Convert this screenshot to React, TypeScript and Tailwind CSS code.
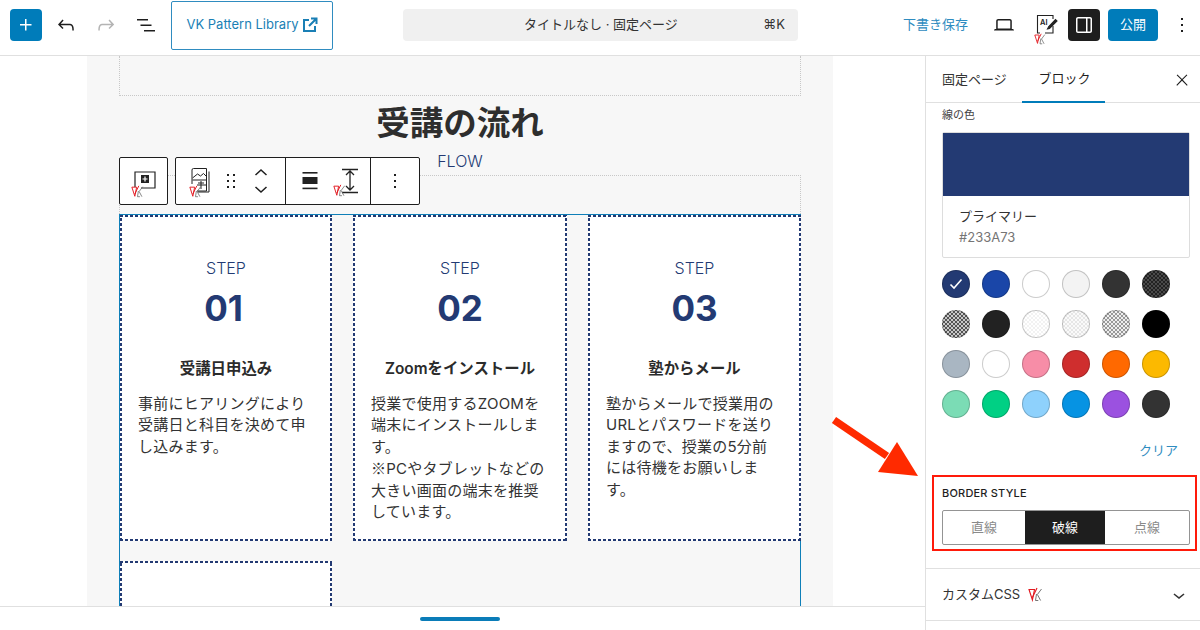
import React from "react";

const font = "font-['Inter','Noto_Sans_CJK_JP',sans-serif]";

function Wp({ d, size = 24, className = "" }: { d: string; size?: number; className?: string }) {
  return (
    <svg width={size} height={size} viewBox="0 0 24 24" fill="currentColor" className={className}>
      <path d={d} />
    </svg>
  );
}

const P = {
  plus: "M11 12.5V17.5H12.5V12.5H17.5V11H12.5V6H11V11H6V12.5H11Z",
  undo: "M18.3 11.7c-.6-.6-1.4-.9-2.3-.9H6.7l2.9-3.3-1.1-1-4.5 5L8.5 16l1-1-2.7-2.7H16c.5 0 .9.2 1.3.5 1 1 1 3.4 1 4.5v.3h1.5v-.2c0-1.5 0-4.3-1.5-5.7z",
  redo: "M15.6 6.5l-1.1 1 2.9 3.3H8c-.9 0-1.7.3-2.3.9-1.4 1.5-1.4 4.2-1.4 5.6v.2h1.5v-.3c0-1.1 0-3.5 1-4.5.3-.3.7-.5 1.3-.5h9.2L14.5 15l1.1 1.1 4.6-4.6-4.6-5z",
  list: "M3 6h11v1.5H3V6zm3.5 5.5h11V13h-11v-1.5zM21 17H10v1.5h11V17z",
  more: "M13 19h-2v-2h2v2zm0-6h-2v-2h2v2zm0-6h-2V5h2v2z",
  drag: "M8 7h2V5H8v2zm0 6h2v-2H8v2zm0 6h2v-2H8v2zm6-14v2h2V5h-2zm0 8h2v-2h-2v2zm0 6h2v-2h-2v2z",
  close: "M13 11.8l6.1-6.3-1-1-6.1 6.2-6.1-6.2-1 1 6.1 6.3-6.5 6.7 1 1 6.5-6.6 6.5 6.6 1-1z",
  panel: "M18 4H6c-1.1 0-2 .9-2 2v12c0 1.1.9 2 2 2h12c1.1 0 2-.9 2-2V6c0-1.1-.9-2-2-2zM5.5 18V6c0-.3.2-.5.5-.5h8v13H6a.5.5 0 01-.5-.5zm13 0c0 .3-.2.5-.5.5h-2.5v-13H18c.3 0 .5.2.5.5v12z",
  laptop: "M20.5 16h-.7V8c0-1.1-.9-2-2-2H6.2c-1.1 0-2 .9-2 2v8h-.7c-.8 0-1.5.7-1.5 1.5h20c0-.8-.7-1.5-1.5-1.5zM5.7 8c0-.3.2-.5.5-.5h11.6c.3 0 .5.2.5.5v7.6H5.7V8z",
  chevDown: "M17.5 11.6L12 16l-5.5-4.4.9-1.2L12 14l4.5-3.6 1 1.2z",
};

function Vk({ className = "", size = 15 }: { className?: string; size?: number }) {
  return (
    <svg width={size} height={size} viewBox="0 0 15 15" fill="none" className={className}>
      <path d="M1 2.5h5.5L4.4 13z" stroke="#e2171e" strokeWidth="1.1" />
      <path d="M9 1L4.4 10.5" stroke="#e2171e" strokeWidth="1.1" />
      <path d="M8.5 7l-1 6.5h2.8M13.5 2L9.4 7.5l3.2 6" stroke="#666" strokeWidth="0.9" />
    </svg>
  );
}

function HeaderIcon({ d, className = "" }: { d: string; className?: string }) {
  return (
    <div className={`w-10 h-8 flex items-center justify-center ${className}`}>
      <Wp d={d} />
    </div>
  );
}

const swatches = [
  "bg-[#233a73]",
  "bg-[#1a46a8]",
  "bg-white",
  "bg-[#f3f3f3]",
  "bg-[#333333]",
  "bg-[repeating-conic-gradient(#222_0_25%,#4a4a4a_0_50%)] bg-[length:4px_4px]",
  "bg-[repeating-conic-gradient(#555_0_25%,#c8c8c8_0_50%)] bg-[length:4px_4px]",
  "bg-[#222222]",
  "bg-[repeating-conic-gradient(#f2f2f2_0_25%,#fff_0_50%)] bg-[length:4px_4px]",
  "bg-[repeating-conic-gradient(#e6e6e6_0_25%,#fafafa_0_50%)] bg-[length:4px_4px]",
  "bg-[repeating-conic-gradient(#999_0_25%,#eee_0_50%)] bg-[length:4px_4px]",
  "bg-black",
  "bg-[#a9b6c2]",
  "bg-white",
  "bg-[#f78da7]",
  "bg-[#cf2e2e]",
  "bg-[#ff6900]",
  "bg-[#fcb900]",
  "bg-[#7bdcb5]",
  "bg-[#00d084]",
  "bg-[#8ed1fc]",
  "bg-[#0693e3]",
  "bg-[#9b51e0]",
  "bg-[#333333]",
];

const dashed =
  "p-[2px] [background:repeating-linear-gradient(90deg,#233a73_0_3px,transparent_3px_5px)_top/100%_2px_no-repeat,repeating-linear-gradient(90deg,#233a73_0_3px,transparent_3px_5px)_bottom/100%_2px_no-repeat,repeating-linear-gradient(0deg,#233a73_0_3px,transparent_3px_5px)_left/2px_100%_no-repeat,repeating-linear-gradient(0deg,#233a73_0_3px,transparent_3px_5px)_right/2px_100%_no-repeat,#fff]";

function Card({ step, title, lines, w, stepClass = "" }: { step: string; title: string; lines: React.ReactNode[]; w: string; stepClass?: string }) {
  return (
    <div className={`${w} h-[326px] shrink-0 flex flex-col ${dashed}`}>
      <div className="mt-[40px] text-center text-[16px] leading-[22px] text-[#233a73] font-['Inter',sans-serif] font-light">STEP</div>
      <div className={`mt-[7px] text-center text-[35px] leading-[44px] font-bold text-[#233a73] font-['Inter',sans-serif] ${stepClass}`}>{step}</div>
      <div className="mt-[27px] text-center text-[15.4px] leading-[24px] font-semibold text-[#2b2b2b]">{title}</div>
      <div className="mt-[12px] px-[16px] text-[15px] leading-[21.4px] tracking-[0.25px] text-[#333333] whitespace-nowrap">
        {lines.map((l, i) => (
          <div key={i}>{l}</div>
        ))}
      </div>
    </div>
  );
}

export default function App() {
  return (
    <div className={`relative w-[1200px] h-[630px] overflow-hidden bg-white text-[#1e1e1e] ${font}`}>
      {/* header */}
      <header className="h-[56px] pb-[5px] border-b border-[#e0e0e0] flex items-center pl-[10px] pr-[2px]">
        <div className="w-8 h-8 rounded-sm bg-[#007cba] text-white flex items-center justify-center">
          <Wp d={P.plus} />
        </div>
        <HeaderIcon d={P.undo} className="ml-[4px]" />
        <HeaderIcon d={P.redo} className="text-[#b4b4b4]" />
        <HeaderIcon d={P.list} />
        <div className="ml-[5px] w-[162px] h-[49px] border border-[#2f8cc0] rounded-[2px] flex items-center justify-center gap-[3px] text-[#1a7fb5] text-[13px]">
          <span>VK Pattern Library</span>
          <svg width="16" height="16" viewBox="0 0 16 16" fill="none" stroke="currentColor" strokeWidth="2">
            <path d="M7 3H2v11h11V9M9 1.5h5.5V7M14 2L7 9" />
          </svg>
        </div>
        <div className="ml-[70px] w-[395px] h-8 rounded-[4px] bg-[#f0f0f0] flex items-center justify-between text-[13px] text-[#333333] pl-[121px] pr-[13px]">
          <span>タイトルなし · 固定ページ</span>
          <span>⌘K</span>
        </div>
        <span className="ml-[105px] text-[13px] text-[#2f8cc0]">下書き保存</span>
        <div className="ml-[16px] w-[40px] flex justify-center">
          <Wp d={P.laptop} />
        </div>
        <div className="relative ml-[1px] w-[40px] h-8 flex justify-center items-center">
          <svg width="24" height="24" viewBox="0 0 24 24" fill="none" stroke="#222" strokeWidth="1.1" className="ml-[2px]">
            <path d="M6 20H3.5V2.5H19V6M19 13v7h-8" />
            <path d="M14.5 14l7-7.5 1.5 1.5-7.5 7.5-2 .5z" fill="#222" />
            <text x="6" y="11.5" fontSize="7.5" fontWeight="600" stroke="none" fill="#222">AI</text>
          </svg>
          <Vk size={12} className="absolute left-[9px] bottom-[-4px]" />
        </div>
        <div className="ml-[3px] w-8 h-8 rounded-sm bg-[#1e1e1e] text-white flex items-center justify-center">
          <Wp d={P.panel} />
        </div>
        <div className="ml-[8px] w-[50px] h-8 rounded-sm bg-[#007cba] text-white text-[13px] flex items-center justify-center">公開</div>
        <div className="ml-[12px] w-[24px] flex justify-center">
          <Wp d={P.more} />
        </div>
      </header>

      <div className="flex h-[574px]">
        {/* canvas */}
        <main className="relative w-[925px] shrink-0 flex flex-col">
          <div className="h-[550px] overflow-hidden pl-[87px]">
            <div className="relative w-[746px] h-[550px] bg-[#f7f7f7] px-[32px]">
              <div className="h-[40px] border border-t-0 border-dotted border-[#c8c8c8]"></div>
              <h1 className="mt-[3px] h-[48px] text-center text-[33.5px] leading-[48px] font-bold text-[#2e2e2e]">受講の流れ</h1>
              <div className="mt-[2px] h-[24px] text-center text-[16px] leading-[24px] text-[#233a73] font-light font-['Inter',sans-serif]">FLOW</div>
              <div className="mt-[2px] h-[39px] border border-b-0 border-dotted border-[#c8c8c8]"></div>
              <div className="h-[420px] border-t border-x border-[#0f7fb8]">
                <div className="flex gap-[21px]">
                  <Card
                    w="w-[212px]"
                    step="01"
                    stepClass="pr-[5px]"
                    title="受講日申込み"
                    lines={["事前にヒアリングにより", "受講日と科目を決めて申", "し込みます。"]}
                  />
                  <Card
                    w="w-[214px]"
                    step="02"
                    title="Zoomをインストール"
                    lines={[
                      "授業で使用するZOOMを",
                      "端末にインストールしま",
                      "す。",
                      <><span className="font-['Noto_Sans_CJK_JP',sans-serif]">※</span>PCやタブレットなどの</>,
                      "大きい画面の端末を推奨",
                      "しています。",
                    ]}
                  />
                  <Card
                    w="w-[213px]"
                    step="03"
                    title="塾からメール"
                    lines={["塾からメールで授業用の", "URLとパスワードを送り", "ますので、授業の5分前", "には待機をお願いしま", "す。"]}
                  />
                </div>
                <div className={`mt-[20px] w-[212px] h-[80px] ${dashed}`}></div>
              </div>

              {/* block toolbar */}
              <div className="absolute left-[32px] top-[101px] flex gap-[7px] text-[#1e1e1e]">
                <div className="relative w-[49px] h-[48px] bg-white border border-[#1e1e1e] rounded-[2px] flex items-center justify-center">
                  <svg width="26" height="24" viewBox="0 0 26 24" fill="none" stroke="#222" strokeWidth="1.2">
                    <path d="M4 18V3h20v16H10" />
                    <rect x="10" y="6" width="8" height="8" fill="#222" stroke="none" />
                    <path d="M14 7.5v5M11.5 10h5" stroke="#fff" strokeWidth="1.2" />
                  </svg>
                  <Vk size={13} className="absolute left-[11px] bottom-[6px]" />
                </div>
                <div className="h-[48px] bg-white border border-[#1e1e1e] rounded-[2px] flex">
                  <div className="w-[110px] border-r border-[#1e1e1e] flex items-center relative">
                    <svg width="24" height="28" viewBox="0 0 24 28" fill="none" stroke="#222" strokeWidth="1" className="ml-[13px]">
                      <path d="M3 17V3a1.5 1.5 0 011.5-1.5h13V24H8" />
                      <path d="M3.5 11l5-4 3 2 3-2.5 3 3M3.5 13h14M8 18h9M12 14v8M9 16h6" />
                      <path d="M20 4.5v20.5H9" />
                    </svg>
                    <Vk size={13} className="absolute left-[13px] bottom-[6px]" />
                    <Wp d={P.drag} size={24} className="ml-[6px]" />
                    <div className="ml-[11px] flex flex-col items-center gap-[10px]">
                      <svg width="14" height="8" viewBox="0 0 14 8" fill="none" stroke="currentColor" strokeWidth="1.5"><path d="M1.5 7L7 2l5.5 5" /></svg>
                      <svg width="14" height="8" viewBox="0 0 14 8" fill="none" stroke="currentColor" strokeWidth="1.5"><path d="M1.5 1L7 6l5.5-5" /></svg>
                    </div>
                  </div>
                  <div className="relative w-[85px] border-r border-[#1e1e1e] flex items-center">
                    <svg width="16" height="18" viewBox="0 0 16 18" className="ml-[16px]">
                      <rect x="0.5" y="0" width="15" height="1.6" fill="#222" />
                      <rect x="0.5" y="5" width="15" height="7" fill="#222" />
                      <rect x="0.5" y="15.6" width="15" height="1.6" fill="#222" />
                    </svg>
                    <svg width="20" height="26" viewBox="0 0 20 26" fill="none" stroke="#222" strokeWidth="1.3" className="ml-[22px]">
                      <path d="M2 1.5h16M2 24.5h16M10 3v19M6 7l4-4 4 4M6 18l4 4 4-4" />
                    </svg>
                    <Vk size={13} className="absolute left-[47px] bottom-[7px]" />
                  </div>
                  <div className="w-[48px] flex items-center justify-center">
                    <Wp d={P.more} />
                  </div>
                </div>
              </div>
            </div>
          </div>
          <div className="h-[24px] bg-white border-t border-[#e0e0e0] flex justify-center pt-[10px] pr-[5px]">
            <div className="w-[80px] h-[4px] rounded-full bg-[#0a7cb8]"></div>
          </div>
        </main>

        {/* sidebar */}
        <aside className="w-[275px] shrink-0 border-l border-[#e0e0e0] text-[13px] flex flex-col overflow-hidden">
          <div className="h-[47px] shrink-0 border-b border-[#e0e0e0] flex items-center pl-[16px] relative">
            <span className="text-[#333333] w-[80px] shrink-0 pt-[1px]">固定ページ</span>
            <div className="relative h-[47px] w-[83px] flex items-center justify-center border-b-2 border-[#007cba] pl-[2px] pt-[1px]">ブロック</div>
            <Wp d={P.close} size={18} className="absolute right-[9px] top-[15px]" />
          </div>
          <div className="pl-[16px] pr-[10px]">
            <div className="h-[29px] pt-[5px] text-[11px] leading-[15px] text-[#444444]">線の色</div>
            <div className="border border-[#dddddd] rounded-[2px] h-[126px]">
              <div className="h-[63px] bg-[#233a73]"></div>
              <div className="pl-[16px] pt-[10px]">
                <div className="text-[13px] leading-[20px] text-[#333333]">プライマリー</div>
                <div className="mt-[1px] text-[13px] leading-[20px] text-[#757575]">#233A73</div>
              </div>
            </div>
            <div className="mt-[12px] grid grid-cols-[repeat(6,28px)] gap-x-[12px] gap-y-[12px]">
              {swatches.map((c, i) => (
                <div key={i} className={`w-[28px] h-[28px] rounded-full border border-black/20 flex items-center justify-center ${c}`}>
                  {i === 0 && (
                    <svg width="14" height="12" viewBox="0 0 14 12" fill="none" stroke="#fff" strokeWidth="1.6">
                      <path d="M1.5 6.5l3.5 3.5L12.5 1.5" />
                    </svg>
                  )}
                </div>
              ))}
            </div>
            <div className="mt-[22px] pr-[12px] text-right text-[13px] leading-[20px] text-[#2f8cc0]">クリア</div>
          </div>
          <div className="mt-[15px] ml-[6px] mr-[3px] h-[76px] border-[2px] border-[#ff1a0a] pl-[8px] pr-[5px] pt-[8px]">
            <div className="text-[11px] leading-[16px] font-medium tracking-[0.2px] text-[#1e1e1e]">BORDER STYLE</div>
            <div className="mt-[9px] h-[35px] border border-[#949494] rounded-[2px] flex items-stretch text-[13px] text-[#8a8a8a]">
              <div className="w-[82px] flex items-center justify-center">直線</div>
              <div className="w-[80px] bg-[#1e1e1e] text-white flex items-center justify-center">破線</div>
              <div className="flex-1 flex items-center justify-center">点線</div>
            </div>
          </div>
          <div className="mt-[17px] h-[53px] border-y border-[#e0e0e0] flex items-center pl-[16px] pr-[9px] text-[13px] text-[#333333]">
            <span>カスタムCSS</span>
            <Vk className="ml-[8px]" />
            <Wp d={P.chevDown} className="ml-auto" />
          </div>
        </aside>
      </div>

      {/* annotation arrow */}
      <svg className="absolute left-[825px] top-[410px]" width="100" height="75" viewBox="0 0 100 75">
        <path d="M9 10L62 46" stroke="#ff2a00" strokeWidth="7.5" />
        <path d="M72 32L53 62L93 66z" fill="#ff2a00" />
      </svg>
    </div>
  );
}
